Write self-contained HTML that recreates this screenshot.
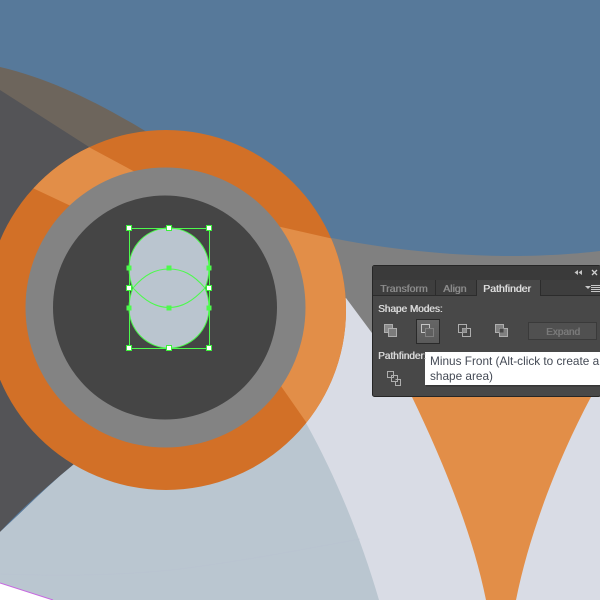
<!DOCTYPE html>
<html>
<head>
<meta charset="utf-8">
<style>
html,body{margin:0;padding:0;background:#57799a}
#s{position:relative;width:600px;height:600px;overflow:hidden;font-family:"Liberation Sans",sans-serif}
svg{position:absolute;left:0;top:0}
.t{position:absolute;white-space:nowrap;line-height:14px;text-shadow:.5px 0 currentColor}
</style>
</head>
<body>
<div id="s">
<svg width="600" height="600" viewBox="0 0 600 600">
<defs>
<clipPath id="ring"><circle cx="166" cy="310" r="180"/></clipPath>
<linearGradient id="btn" x1="0" y1="0" x2="0" y2="1"><stop offset="0" stop-color="#666"/><stop offset="1" stop-color="#5a5a5a"/></linearGradient>
</defs>
<rect width="600" height="600" fill="#57799a"/>
<path d="M0,67 C55,80 105,106 160,140 L160,300 L0,300Z" fill="#6d655c"/>
<path d="M332,238 C400,252 470,256 510,256 C545,256 575,254 600,251 L600,420 L300,420 L300,238Z" fill="#808080"/>
<path d="M346,298 L372,333 L420,395 L600,395 L600,600 L0,600 L0,532 L73,465 L200,400Z" fill="#d9dce5"/>
<path d="M0,90 L100,154 L200,300 L73,465 C45,488 20,510 0,532Z" fill="#545457"/>
<path d="M0,532 C24,510 48,485 73,465 L200,400 L306,423 C335,475 360,535 379,600 L0,600Z" fill="#bac6d0"/>
<path d="M0,574 C60,576 120,576 180,569 C250,560 310,548 360,539" fill="none" stroke="#b7c1d1" stroke-width="1" opacity=".35"/>
<path d="M0,583 L53,600 L0,600Z" fill="#fff"/>
<path d="M0,583 L53,600" stroke="#c768e0" stroke-width="1" fill="none"/>
<path d="M408,388 L412,397 C440,455 472,530 486,600 L516,600 C530,530 560,455 591,397 L596,388Z" fill="#e28e48"/>
<circle cx="166" cy="310" r="180" fill="#d27027"/>
<g clip-path="url(#ring)" fill="#e28e48">
<polygon points="70,137 150,180 90,215 5,175"/>
<polygon points="250,220 360,245 360,442 320,442 260,356"/>
</g>
<circle cx="165.500" cy="307.500" r="140" fill="#838383"/>
<circle cx="165" cy="307.500" r="112" fill="#454545"/>

<path d="M129,268 A40,40 0 0 1 209,268 C209,277 207,283 205,288 C207,293 209,299 209,308 A40,40 0 0 1 129,308 C129,299 131,293 133,288 C131,283 129,277 129,268Z" fill="#bac5cf"/>
<g fill="none" stroke="#4dfa4d" stroke-width="1">
<path d="M129,268 A40,40 0 0 1 209,268 C209,277 207,283 205,288 C207,293 209,299 209,308 A40,40 0 0 1 129,308 C129,299 131,293 133,288 C131,283 129,277 129,268Z"/>
<path d="M133,288 C145,274 156,269 169,269 C182,269 193,274 205,288 C193,301 182,307.500 169,307.500 C156,307.500 145,301 133,288Z"/>
<rect x="129.500" y="228.500" width="80" height="120"/>
</g>
<g fill="#4dfa4d">
<rect x="126.500" y="265.500" width="5" height="5"/><rect x="206.500" y="265.500" width="5" height="5"/>
<rect x="166.500" y="265.500" width="5" height="5"/><rect x="166.500" y="305.500" width="5" height="5"/>
<rect x="126.500" y="305.500" width="5" height="5"/><rect x="206.500" y="305.500" width="5" height="5"/>
</g>
<g fill="#fff" stroke="#3cf03c" stroke-width="1">
<rect x="126.500" y="225.500" width="5" height="5"/><rect x="166.500" y="225.500" width="5" height="5"/><rect x="206.500" y="225.500" width="5" height="5"/>
<rect x="126.500" y="285.500" width="5" height="5"/><rect x="206.500" y="285.500" width="5" height="5"/>
<rect x="126.500" y="345.500" width="5" height="5"/><rect x="166.500" y="345.500" width="5" height="5"/><rect x="206.500" y="345.500" width="5" height="5"/>
</g>

<rect x="372.500" y="265.500" width="228" height="131" rx="2" fill="#484848" stroke="#262626"/>
<rect x="373" y="266" width="227" height="14" fill="#3a3a3a"/>
<rect x="373" y="280" width="227" height="16" fill="#3e3e3e"/>
<rect x="373" y="295" width="227" height="1" fill="#2c2c2c"/>
<rect x="435" y="280" width="1" height="16" fill="#2c2c2c"/>
<rect x="476" y="280" width="1" height="16" fill="#2c2c2c"/>
<rect x="477" y="280" width="63" height="16" fill="#484848"/>
<rect x="540" y="280" width="1" height="16" fill="#2c2c2c"/>
<path d="M578,270 L574.500,272.500 L578,275Z M582,270 L578.500,272.500 L582,275Z" fill="#c4c4c4"/>
<path d="M592,270 L597,275 M597,270 L592,275" stroke="#d0d0d0" stroke-width="1.300" fill="none"/>
<path d="M585,286 L591,286 L588,289Z" fill="#c8c8c8"/>
<path d="M591,285.500H600M591,287.500H600M591,289.500H600M591,291.500H600" stroke="#c8c8c8" stroke-width="1" fill="none"/>

<rect x="416.500" y="319.500" width="23" height="24" fill="url(#btn)" stroke="#2a2a2a"/>
<rect x="528.500" y="322.500" width="68" height="17" fill="#505050" stroke="#3a3a3a"/>

<g fill="none" stroke="#aeaeae" stroke-width="1">
<rect x="384.500" y="324.500" width="8" height="8" fill="#8a8a8a"/>
<rect x="388.500" y="328.500" width="8" height="8" fill="#7c7c7c"/>
<path d="M425.500,332.500 H421.500 V324.500 H429.500 V328.500 H425.500 V332.500" stroke="#c4c4c4"/>
<rect x="425.500" y="328.500" width="8" height="8" stroke="#808080"/>
<rect x="458.500" y="324.500" width="8" height="8"/>
<rect x="462.500" y="328.500" width="8" height="8"/>
<rect x="462.500" y="328.500" width="4" height="4" fill="#8a8a8a" stroke="none"/>
<rect x="495.500" y="324.500" width="8" height="8" fill="#808080"/>
<rect x="499.500" y="328.500" width="8" height="8" fill="#808080"/>
<rect x="499.500" y="328.500" width="4" height="4" fill="#484848" stroke="none"/>
<rect x="387.500" y="371.500" width="6" height="6"/>
<rect x="391.500" y="375.500" width="6" height="6"/>
<path d="M395.500,379.500 H400.500 V385.500 H395.500 V381"/>
</g>

<rect x="425" y="352" width="177" height="33" fill="#000" opacity=".25" transform="translate(1,1.500)"/>
<rect x="425" y="352" width="176" height="33" fill="#fff"/>
</svg>
<div class="t" style="left:380px;top:282px;font-size:10.500px;color:#8a8a8a">Transform</div>
<div class="t" style="left:443px;top:282px;font-size:10.500px;color:#8a8a8a">Align</div>
<div class="t" style="left:483px;top:282px;font-size:10.500px;color:#dcdcdc">Pathfinder</div>
<div class="t" style="left:378px;top:303px;font-size:10px;color:#d8d8d8">Shape Modes:</div>
<div class="t" style="left:546px;top:326px;font-size:10px;color:#7a7a7a">Expand</div>
<div class="t" style="left:378px;top:350px;font-size:10px;color:#d8d8d8">Pathfinder:</div>
<div class="t" style="left:430px;top:354px;font-size:11.800px;line-height:15px;color:#444a55;text-shadow:none">Minus Front (Alt-click to create a<br>shape area)</div>
</div>
</body>
</html>
